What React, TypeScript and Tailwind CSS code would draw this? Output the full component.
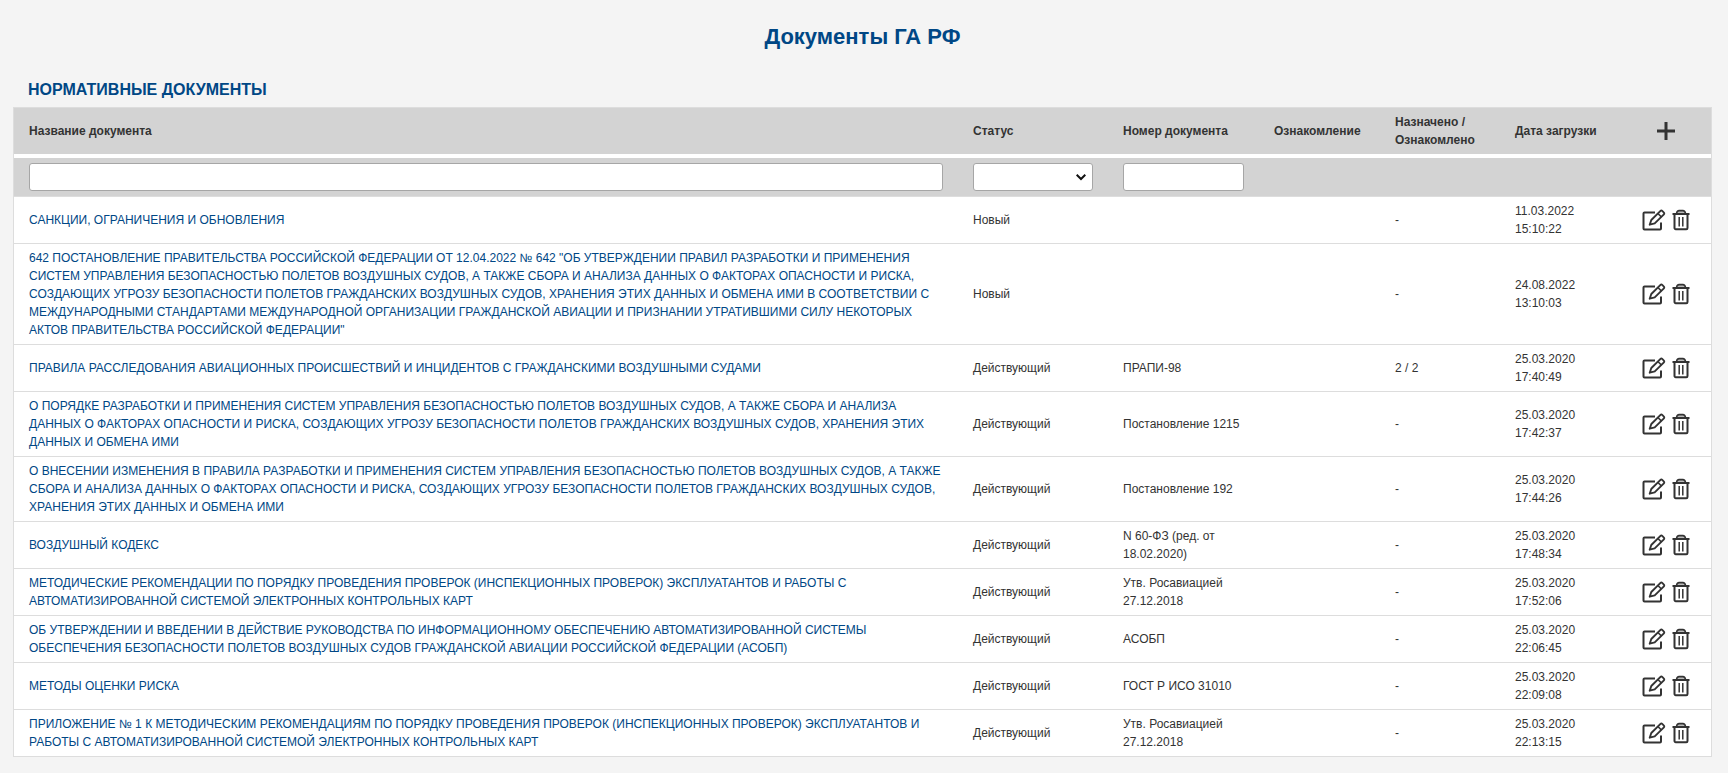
type Doc = {
  name: string;
  status: string;
  number: string;
  assigned: string;
  date: string;
  time: string;
};

const docs: Doc[] = [
  { name: 'САНКЦИИ, ОГРАНИЧЕНИЯ И ОБНОВЛЕНИЯ', status: 'Новый', number: '', assigned: '-', date: '11.03.2022', time: '15:10:22' },
  { name: '642 ПОСТАНОВЛЕНИЕ ПРАВИТЕЛЬСТВА РОССИЙСКОЙ ФЕДЕРАЦИИ ОТ 12.04.2022 № 642 "ОБ УТВЕРЖДЕНИИ ПРАВИЛ РАЗРАБОТКИ И ПРИМЕНЕНИЯ СИСТЕМ УПРАВЛЕНИЯ БЕЗОПАСНОСТЬЮ ПОЛЕТОВ ВОЗДУШНЫХ СУДОВ, А ТАКЖЕ СБОРА И АНАЛИЗА ДАННЫХ О ФАКТОРАХ ОПАСНОСТИ И РИСКА, СОЗДАЮЩИХ УГРОЗУ БЕЗОПАСНОСТИ ПОЛЕТОВ ГРАЖДАНСКИХ ВОЗДУШНЫХ СУДОВ, ХРАНЕНИЯ ЭТИХ ДАННЫХ И ОБМЕНА ИМИ В СООТВЕТСТВИИ С МЕЖДУНАРОДНЫМИ СТАНДАРТАМИ МЕЖДУНАРОДНОЙ ОРГАНИЗАЦИИ ГРАЖДАНСКОЙ АВИАЦИИ И ПРИЗНАНИИ УТРАТИВШИМИ СИЛУ НЕКОТОРЫХ АКТОВ ПРАВИТЕЛЬСТВА РОССИЙСКОЙ ФЕДЕРАЦИИ"', status: 'Новый', number: '', assigned: '-', date: '24.08.2022', time: '13:10:03' },
  { name: 'ПРАВИЛА РАССЛЕДОВАНИЯ АВИАЦИОННЫХ ПРОИСШЕСТВИЙ И ИНЦИДЕНТОВ С ГРАЖДАНСКИМИ ВОЗДУШНЫМИ СУДАМИ', status: 'Действующий', number: 'ПРАПИ-98', assigned: '2 / 2', date: '25.03.2020', time: '17:40:49' },
  { name: 'О ПОРЯДКЕ РАЗРАБОТКИ И ПРИМЕНЕНИЯ СИСТЕМ УПРАВЛЕНИЯ БЕЗОПАСНОСТЬЮ ПОЛЕТОВ ВОЗДУШНЫХ СУДОВ, А ТАКЖЕ СБОРА И АНАЛИЗА ДАННЫХ О ФАКТОРАХ ОПАСНОСТИ И РИСКА, СОЗДАЮЩИХ УГРОЗУ БЕЗОПАСНОСТИ ПОЛЕТОВ ГРАЖДАНСКИХ ВОЗДУШНЫХ СУДОВ, ХРАНЕНИЯ ЭТИХ ДАННЫХ И ОБМЕНА ИМИ', status: 'Действующий', number: 'Постановление 1215', assigned: '-', date: '25.03.2020', time: '17:42:37' },
  { name: 'О ВНЕСЕНИИ ИЗМЕНЕНИЯ В ПРАВИЛА РАЗРАБОТКИ И ПРИМЕНЕНИЯ СИСТЕМ УПРАВЛЕНИЯ БЕЗОПАСНОСТЬЮ ПОЛЕТОВ ВОЗДУШНЫХ СУДОВ, А ТАКЖЕ СБОРА И АНАЛИЗА ДАННЫХ О ФАКТОРАХ ОПАСНОСТИ И РИСКА, СОЗДАЮЩИХ УГРОЗУ БЕЗОПАСНОСТИ ПОЛЕТОВ ГРАЖДАНСКИХ ВОЗДУШНЫХ СУДОВ, ХРАНЕНИЯ ЭТИХ ДАННЫХ И ОБМЕНА ИМИ', status: 'Действующий', number: 'Постановление 192', assigned: '-', date: '25.03.2020', time: '17:44:26' },
  { name: 'ВОЗДУШНЫЙ КОДЕКС', status: 'Действующий', number: 'N 60-ФЗ (ред. от 18.02.2020)', assigned: '-', date: '25.03.2020', time: '17:48:34' },
  { name: 'МЕТОДИЧЕСКИЕ РЕКОМЕНДАЦИИ ПО ПОРЯДКУ ПРОВЕДЕНИЯ ПРОВЕРОК (ИНСПЕКЦИОННЫХ ПРОВЕРОК) ЭКСПЛУАТАНТОВ И РАБОТЫ С АВТОМАТИЗИРОВАННОЙ СИСТЕМОЙ ЭЛЕКТРОННЫХ КОНТРОЛЬНЫХ КАРТ', status: 'Действующий', number: 'Утв. Росавиацией 27.12.2018', assigned: '-', date: '25.03.2020', time: '17:52:06' },
  { name: 'ОБ УТВЕРЖДЕНИИ И ВВЕДЕНИИ В ДЕЙСТВИЕ РУКОВОДСТВА ПО ИНФОРМАЦИОННОМУ ОБЕСПЕЧЕНИЮ АВТОМАТИЗИРОВАННОЙ СИСТЕМЫ ОБЕСПЕЧЕНИЯ БЕЗОПАСНОСТИ ПОЛЕТОВ ВОЗДУШНЫХ СУДОВ ГРАЖДАНСКОЙ АВИАЦИИ РОССИЙСКОЙ ФЕДЕРАЦИИ (АСОБП)', status: 'Действующий', number: 'АСОБП', assigned: '-', date: '25.03.2020', time: '22:06:45' },
  { name: 'МЕТОДЫ ОЦЕНКИ РИСКА', status: 'Действующий', number: 'ГОСТ Р ИСО 31010', assigned: '-', date: '25.03.2020', time: '22:09:08' },
  { name: 'ПРИЛОЖЕНИЕ № 1 К МЕТОДИЧЕСКИМ РЕКОМЕНДАЦИЯМ ПО ПОРЯДКУ ПРОВЕДЕНИЯ ПРОВЕРОК (ИНСПЕКЦИОННЫХ ПРОВЕРОК) ЭКСПЛУАТАНТОВ И РАБОТЫ С АВТОМАТИЗИРОВАННОЙ СИСТЕМОЙ ЭЛЕКТРОННЫХ КОНТРОЛЬНЫХ КАРТ', status: 'Действующий', number: 'Утв. Росавиацией 27.12.2018', assigned: '-', date: '25.03.2020', time: '22:13:15' },
];

function EditIcon() {
  return (
    <svg width="24" height="22" viewBox="0 0 24 22" fill="none" stroke="currentColor" strokeWidth="2" strokeLinejoin="round" aria-hidden="true">
      <path d="M13 3.500H2.500a1 1 0 0 0-1 1v15a1 1 0 0 0 1 1h15.500a1 1 0 0 0 1-1V13.500" />
      <path strokeWidth="1.900" d="M7.700 15.700l1.600-4.700 9.200-9.100a1.200 1.200 0 0 1 1.700 0l1.700 1.700a1.200 1.200 0 0 1 0 1.700l-9.200 9.100z" />
      <path strokeWidth="1.500" d="M15.900 4.500l3.400 3.400" />
    </svg>
  );
}

function TrashIcon() {
  return (
    <svg width="18" height="22" viewBox="0 0 18 22" fill="none" stroke="currentColor" aria-hidden="true">
      <path fill="#bbb" strokeWidth="1.6" d="M4.500 4.500c.3-1.900 1.200-2.900 2.600-2.900h3.800c1.400 0 2.300 1 2.600 2.900" />
      <path strokeWidth="2" d="M.5 5h17" />
      <path strokeWidth="2" d="M2.500 5v14a1.200 1.200 0 0 0 1.200 1.200h10.600a1.200 1.200 0 0 0 1.200-1.200V5" />
      <path strokeWidth="1.500" d="M7.200 8v9.500M10.800 8v9.500" />
    </svg>
  );
}

const field = 'block h-7 w-full rounded-[3px] border border-[#a6a6a6] bg-white px-2';

export default function App() {
  return (
    <main className="mr-0.5 bg-[#f4f4f4] pt-[21px] pr-4 pb-4 pl-[13px] font-['Liberation_Sans',Arial,sans-serif] text-[12px] leading-[18px] text-[#333]">
      <h1 className="text-center text-[22px] leading-8 font-bold text-[#004785]">Документы ГА РФ</h1>
      <h2 className="mt-6 mb-[5px] pl-[15px] text-[16px] leading-[25px] font-bold text-[#004785] uppercase">Нормативные документы</h2>
      <table className="w-full table-fixed border-separate border-spacing-0 border border-[#ddd] bg-white text-left">
        <colgroup>
          <col />
          <col className="w-[150px]" />
          <col className="w-[151px]" />
          <col className="w-[121px]" />
          <col className="w-[120px]" />
          <col className="w-[121px]" />
          <col className="w-[90px]" />
        </colgroup>
        <thead className="[&_th]:bg-[#d3d3d3] [&_th]:px-[15px] [&_th]:py-[5px] [&_td]:border-t-4 [&_td]:border-b [&_td]:border-t-white [&_td]:border-b-[#ddd] [&_td]:bg-[#d3d3d3] [&_td]:px-[15px] [&_td]:py-[5px]">
          <tr>
            <th>Название документа</th>
            <th>Статус</th>
            <th>Номер документа</th>
            <th>Ознакомление</th>
            <th>Назначено / Ознакомлено</th>
            <th>Дата загрузки</th>
            <th>
              <button type="button" aria-label="Добавить" className="mx-auto block">
                <svg width="18" height="18" viewBox="0 0 18 18" stroke="currentColor" strokeWidth="3" aria-hidden="true">
                  <path d="M9 0v18M0 9h18" />
                </svg>
              </button>
            </th>
          </tr>
          <tr>
            <td><input type="text" aria-label="Название документа" className={field} /></td>
            <td className="relative">
              <select aria-label="Статус" className={field + ' appearance-none'}>
                <option></option>
                <option>Новый</option>
                <option>Действующий</option>
              </select>
              <svg className="pointer-events-none absolute top-[15px] right-[22px]" width="10" height="8" viewBox="0 0 10 8" fill="none" stroke="#111" strokeWidth="2" aria-hidden="true">
                <path d="M.7 1.800L5 6l4.300-4.200" />
              </svg>
            </td>
            <td><input type="text" aria-label="Номер документа" className={field} /></td>
            <td></td>
            <td></td>
            <td></td>
            <td></td>
          </tr>
        </thead>
        <tbody className="[&_td]:px-[15px] [&_td]:py-[5px] [&_td]:align-middle [&_tr:not(:last-child)>td]:border-b [&_tr:not(:last-child)>td]:border-[#ddd]">
          {docs.map((d) => (
            <tr key={d.time}>
              <td><a href="#" className="text-[#004785]">{d.name}</a></td>
              <td>{d.status}</td>
              <td>{d.number}</td>
              <td></td>
              <td>{d.assigned}</td>
              <td>{d.date} {d.time}</td>
              <td>
                <div className="flex items-center justify-center gap-1.5">
                  <button type="button" aria-label="Редактировать" className="shrink-0"><EditIcon /></button>
                  <button type="button" aria-label="Удалить" className="shrink-0"><TrashIcon /></button>
                </div>
              </td>
            </tr>
          ))}
        </tbody>
      </table>
    </main>
  );
}
